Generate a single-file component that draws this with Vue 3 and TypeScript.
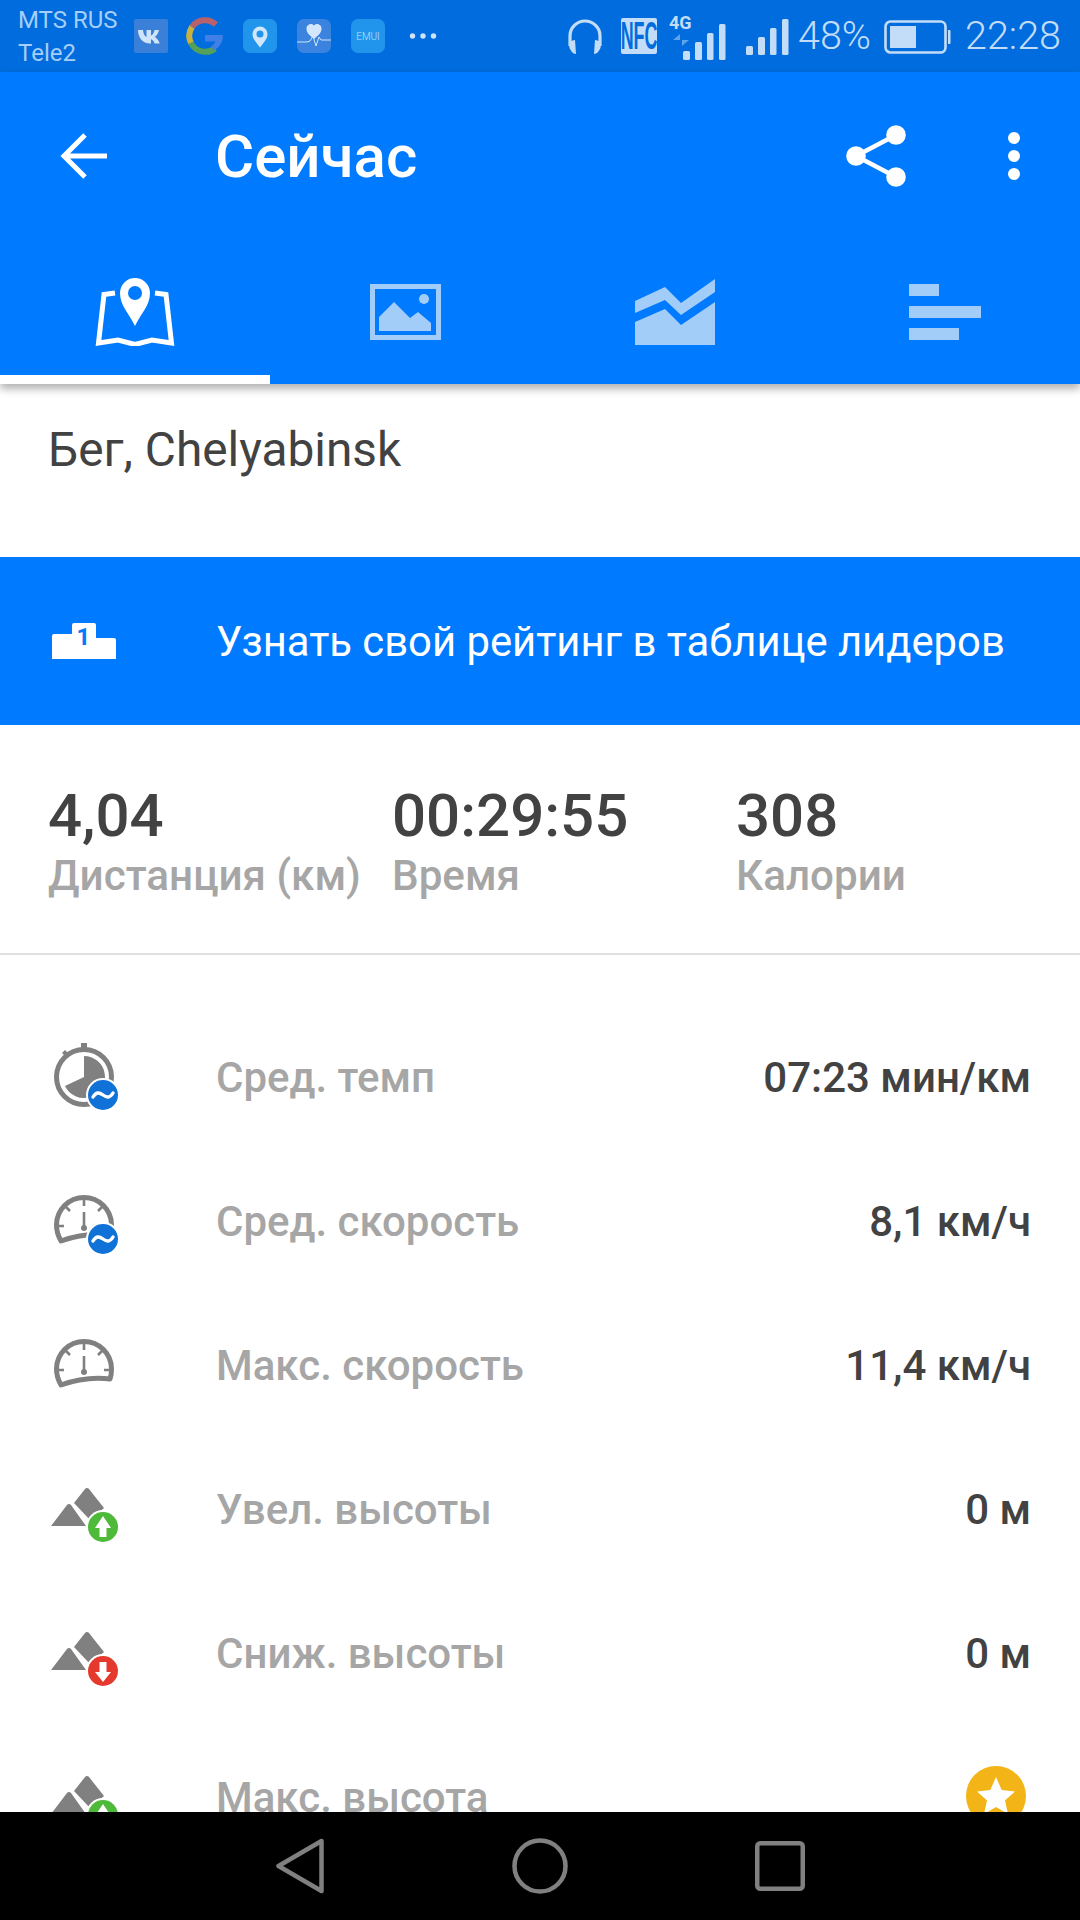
<script setup lang="ts">
interface Row { label: string; value?: string; icon: string }
const rows: Row[] = [
  { label: 'Сред. темп', value: '07:23 мин/км', icon: 'pace' },
  { label: 'Сред. скорость', value: '8,1 км/ч', icon: 'avg' },
  { label: 'Макс. скорость', value: '11,4 км/ч', icon: 'max' },
  { label: 'Увел. высоты', value: '0 м', icon: 'up' },
  { label: 'Сниж. высоты', value: '0 м', icon: 'down' },
  { label: 'Макс. высота', icon: 'top' }
]
const stats = [
  { value: '4,04', label: 'Дистанция (км)' },
  { value: '00:29:55', label: 'Время' },
  { value: '308', label: 'Калории' }
]
</script>

<template>
  <div class="screen">
    <header class="status">
      <div class="carriers"><span>MTS RUS</span><span>Tele2</span></div>
      <div class="notifs">
        <svg class="n1" width="34" height="34" viewBox="0 0 34 34"><rect width="34" height="34" rx="2" fill="#3a80d8"/><path d="M4 11h5c.3 4 2 6.3 3.5 7V11H17v5.500c1.500-.3 3-2.500 3.600-5.500H25c-.7 3.500-2.800 6-4.300 7 1.500.8 4 3 5 6.500h-5c-.7-2.300-2.300-4-3.700-4.300V24.500h-1C8.500 24.500 4.400 19 4 11z" fill="#cfe3fa"/></svg>
        <svg class="n2" width="38" height="38" viewBox="0 0 38 38">
          <path d="M30 7.500A16 16 0 0 0 6 10" fill="none" stroke="#b9616a" stroke-width="6"/>
          <path d="M6 10A16 16 0 0 0 5 26" fill="none" stroke="#c8b23c" stroke-width="6"/>
          <path d="M5 26A16 16 0 0 0 29 31.500" fill="none" stroke="#53a158" stroke-width="6"/>
          <path d="M27.500 33.500 A17 17 0 0 0 37 18H19v6.500h10.500a11 11 0 0 1-4 4.500z" fill="#3f7fe6"/>
        </svg>
        <svg class="n3" width="34" height="34" viewBox="0 0 34 34"><rect width="34" height="34" rx="7" fill="#2195ec"/><path d="M17 28.500c-4.500-6-7.500-9-7.500-13.500a7.500 7.500 0 0 1 15 0c0 4.500-3 7.500-7.500 13.500z" fill="#cfe6fb"/><circle cx="17" cy="15" r="3.500" fill="#2195ec"/></svg>
        <svg class="n4" width="34" height="34" viewBox="0 0 34 34"><rect width="34" height="34" rx="7" fill="#3a84e0"/><path d="M17 20C11 15 9.500 13 9.500 9.500 9.500 6.500 12 5 14 5c1.300 0 2.300.6 3 1.500C17.700 5.600 18.700 5 20 5c2 0 4.500 1.500 4.500 4.500C24.500 13 23 15 17 20z" fill="#d4e6fb"/><path d="M0 23h10l3-1 3-5 3 10 3-9 2 3h10" fill="none" stroke="#cfe3fa" stroke-width="1"/></svg>
        <svg class="n5" width="34" height="34" viewBox="0 0 34 34"><rect width="34" height="34" rx="7" fill="#2195ec"/><text x="17" y="21" text-anchor="middle" class="emui">EMUI</text></svg>
        <svg class="n6" width="28" height="8" viewBox="0 0 28 8" fill="#cfe3fa"><circle cx="3.500" cy="4" r="2.700"/><circle cx="14" cy="4" r="2.700"/><circle cx="24.500" cy="4" r="2.700"/></svg>
      </div>
      <div class="sys">
        <svg width="36" height="37" viewBox="0 0 36 37" class="s-head"><path d="M3 28V18a15 15 0 0 1 30 0v10" fill="none" stroke="#c3dcf8" stroke-width="3.200"/><path d="M2 24c2-1 4-2 6-2l1 14c-3 0-5-3-6.500-6zM34 24c-2-1-4-2-6-2l-1 14c3 0 5-3 6.500-6z" fill="#c3dcf8"/></svg>
        <div class="nfc"><span>NFC</span></div>
        <div class="g4">
          <span class="g4t">4G</span>
          <svg class="g4a" width="16" height="12" viewBox="0 0 16 12"><path d="M7 0v6H0zM9 12V6h7z" fill="#5ea4ec"/></svg>
          <svg class="g4s" width="43" height="36" viewBox="0 0 43 36" fill="#c3dcf8"><rect y="27" width="7" height="9" rx="1.500"/><rect x="12" y="18" width="7" height="18" rx="1.500"/><rect x="24" y="9" width="6.500" height="27" rx="1.500"/><rect x="36" y="0" width="6.500" height="36" rx="1.500"/></svg>
        </div>
        <svg class="s-sig" width="43" height="36" viewBox="0 0 43 36" fill="#c3dcf8"><rect y="27" width="7" height="9" rx="1.500"/><rect x="12" y="18" width="7" height="18" rx="1.500"/><rect x="24" y="9" width="6.500" height="27" rx="1.500"/><rect x="36" y="0" width="6.500" height="36" rx="1.500"/></svg>
        <span class="pct">48%</span>
        <svg class="bat" width="67" height="34" viewBox="0 0 67 34"><rect x="1.500" y="1.500" width="60" height="31" rx="5" fill="none" stroke="#c3dcf8" stroke-width="2.600"/><rect x="6" y="6" width="26" height="22" fill="#c3dcf8"/><path d="M64 10h1.500a1 1 0 0 1 1 1v12a1 1 0 0 1-1 1H64z" fill="#c3dcf8"/></svg>
        <span class="time">22:28</span>
      </div>
    </header>

    <div class="appbar">
      <div class="toolbar">
        <svg class="back" width="48" height="48" viewBox="0 0 48 48"><path d="M47 24H4M25 3 4 24l21 21" fill="none" stroke="#fff" stroke-width="5"/></svg>
        <h1 class="title">Сейчас</h1>
        <svg class="share" width="60" height="62" viewBox="0 0 60 62" fill="#fff"><circle cx="50" cy="10" r="9.800"/><circle cx="10" cy="31" r="9.800"/><circle cx="50" cy="52" r="9.800"/><path d="M50 10 10 31l40 21" fill="none" stroke="#fff" stroke-width="4.500"/></svg>
        <svg class="more" width="12" height="48" viewBox="0 0 12 48" fill="#fff"><circle cx="6" cy="6" r="6"/><circle cx="6" cy="24" r="6"/><circle cx="6" cy="42" r="6"/></svg>
      </div>
      <nav class="tabs">
        <div class="tab active">
          <svg width="80" height="68" viewBox="-1 0 80 68"><path d="M19 15 8 16.500 2.500 65l19.500-3 17 4.500 17-4.500 19.500 3L70 16.500 59 15" fill="none" stroke="#fff" stroke-width="5"/><path d="M39 48C33 35 24 28 24 15a15 15 0 0 1 30 0c0 13-9 20-15 33z" fill="#fff"/><circle cx="39" cy="15" r="7" fill="#007aff"/></svg>
        </div>
        <div class="tab">
          <svg width="71" height="56" viewBox="0 0 71 56" fill="#a3cdf9"><path d="M0 0h71v56H0zM5 5v46h61V5z" fill-rule="evenodd"/><circle cx="54" cy="15" r="5"/><path d="M9 33l15-15 16 16 8-6 13 11v8H9z"/></svg>
        </div>
        <div class="tab">
          <svg width="80" height="66" viewBox="0 0 80 66" fill="#a3cdf9"><path d="M0 22 30 8l16 16L80 0v13L46 36 30 21 0 34zM0 43l30-13 16 16 34-23v43H0z"/></svg>
        </div>
        <div class="tab">
          <svg width="72" height="56" viewBox="0 0 72 56" fill="#a3cdf9"><rect width="30" height="12"/><rect y="22" width="72" height="12"/><rect y="44" width="50" height="12"/></svg>
        </div>
      </nav>
    </div>

    <main class="content">
      <div class="place">Бег, Chelyabinsk</div>
      <div class="banner">
        <svg class="podium" width="64" height="36" viewBox="0 0 64 36"><path d="M20 2a2 2 0 0 1 2-2h20a2 2 0 0 1 2 2v13h18a2 2 0 0 1 2 2v19H0V13a2 2 0 0 1 2-2h18z" fill="#fff"/><text x="31.500" y="22" text-anchor="middle" class="pod-n">1</text></svg>
        <span class="banner-text">Узнать свой рейтинг в таблице лидеров</span>
      </div>
      <div class="stats">
        <div v-for="s in stats" :key="s.label" class="stat">
          <div class="stat-val">{{ s.value }}</div>
          <div class="stat-lab">{{ s.label }}</div>
        </div>
      </div>
      <ul class="list">
        <li v-for="r in rows" :key="r.label" class="row">
          <span class="ico">
            <svg width="70" height="70" viewBox="0 0 70 70">
              <template v-if="r.icon === 'pace'">
                <circle cx="34" cy="35" r="27.500" fill="none" stroke="#808080" stroke-width="5"/>
                <rect x="31" y="1" width="6" height="6" fill="#808080"/>
                <path d="M12 11l3-3 5 5-3 3z" fill="#808080"/>
                <path d="M34 14A21 21 0 1 1 15 44L34 35z" fill="#808080"/>
              </template>
              <template v-else-if="r.icon === 'avg' || r.icon === 'max'">
                <path d="M11 55C7 48 6.500 43 6.500 39A27.500 27.500 0 0 1 61.500 39C61.500 43 61 46 60 49C43 47 25 50 11 55z" fill="none" stroke="#808080" stroke-width="5" stroke-linejoin="round"/>
                <path d="M34 14v6M16 21l4 4M52 21l-4 4M7 40h7M54 40h7" stroke="#808080" stroke-width="2.600"/>
                <path d="M34 26v15" stroke="#808080" stroke-width="2.600"/><circle cx="34" cy="42" r="3" fill="#808080"/>
              </template>
              <template v-else>
                <path d="M1 52 17 31a2.500 2.500 0 0 1 4 0L36 52z" fill="#808080"/>
                <path d="M24 29 35 15a2.500 2.500 0 0 1 4 0L54 34 40 46z" fill="#808080"/>
              </template>
              <template v-if="r.icon === 'pace' || r.icon === 'avg'">
                <circle cx="53" cy="53" r="17" fill="#fff"/>
                <circle cx="53" cy="53" r="15" fill="#1072d6"/>
                <path d="M43 55c3-5 6-5 10-2s7 3 10-2" fill="none" stroke="#fff" stroke-width="3.400" stroke-linecap="round"/>
              </template>
              <template v-if="r.icon === 'up' || r.icon === 'top'">
                <circle cx="53" cy="53" r="17" fill="#fff"/>
                <circle cx="53" cy="53" r="15" fill="#4fb93a"/>
                <path d="M53 42 61 54h-4.500v9h-7v-9H45z" fill="#fff"/>
              </template>
              <template v-if="r.icon === 'down'">
                <circle cx="53" cy="53" r="17" fill="#fff"/>
                <circle cx="53" cy="53" r="15" fill="#e5392e"/>
                <path d="M53 64 61 54h-4.500V44h-7v10H45z" fill="#fff"/>
              </template>
            </svg>
          </span>
          <span class="lab">{{ r.label }}</span>
          <span v-if="r.value" class="val">{{ r.value }}</span>
          <svg v-else class="medal" width="60" height="60" viewBox="0 0 60 60"><circle cx="30" cy="30" r="30" fill="#f2b416"/><path d="M30 11l5.700 13 13.300 1.500-10 9 3 13.500L30 41l-12 7 3-13.500-10-9 13.300-1.500z" fill="#fff"/></svg>
        </li>
      </ul>
    </main>

    <footer class="navbar">
      <svg width="48" height="56" viewBox="0 0 48 56"><path d="M45.500 3 2.500 28l43 25z" fill="none" stroke="#808080" stroke-width="4.500" stroke-linejoin="round"/></svg>
      <svg width="56" height="56" viewBox="0 0 56 56"><circle cx="28" cy="28" r="25.500" fill="none" stroke="#808080" stroke-width="4.500"/></svg>
      <svg width="50" height="50" viewBox="0 0 50 50"><rect x="2.250" y="2.250" width="45.500" height="45.500" rx="3" fill="none" stroke="#808080" stroke-width="4.500"/></svg>
    </footer>
  </div>
</template>

<style scoped>
.screen {
  width: 1080px;
  height: 1920px;
  display: flex;
  flex-direction: column;
  overflow: hidden;
  background: #fff;
  font-family: Roboto, "Noto Sans", sans-serif;
}
.status {
  height: 72px;
  flex: none;
  display: flex;
  align-items: center;
  background: #006cdd;
  color: #a5cef8;
}
.carriers {
  width: 134px;
  flex: none;
  padding-left: 18px;
  box-sizing: border-box;
  display: flex;
  flex-direction: column;
  font-size: 24px;
  line-height: 33px;
  margin-top: 1px;
}
.notifs { display: flex; align-items: center; }
.n1 { margin-right: 18px; }
.n2 { margin-right: 19px; }
.n3 { margin-right: 20px; }
.n4 { margin-right: 20px; }
.n5 { margin-right: 24px; }
.emui { font-size: 10px; font-weight: 300; fill: #bfe0fc; }
.sys {
  margin-left: auto;
  width: 513px;
  flex: none;
  display: flex;
  align-items: center;
  color: #c3dcf8;
}
.s-head { margin-right: 18px; }
.nfc {
  width: 36px;
  height: 36px;
  background: #c3dcf8;
  border-radius: 2px;
  color: #006cdd;
  font: 700 38px/36px "Liberation Sans Narrow", "Liberation Sans", sans-serif;
  margin-right: 12px;
  display: flex;
  justify-content: center;
}
.nfc span { display: block; flex: none; transform: scaleX(.47); }
.g4 { position: relative; width: 57px; height: 44px; margin: 0 20px 0 0; }
.g4t { position: absolute; left: 0; top: -1px; font-weight: 700; font-size: 18px; line-height: 20px; }
.g4a { position: absolute; left: 4px; top: 20px; }
.g4s { position: absolute; left: 14px; bottom: -2px; }
.s-sig { margin: 2px 9px 0 0; }
.pct, .time { font-size: 39.5px; font-weight: 300; line-height: 72px; }
.pct { margin-right: 13px; }
.bat { margin: 2px 14px 0 0; }
.appbar {
  height: 312px;
  flex: none;
  background: #007aff;
  position: relative;
  z-index: 1;
  box-shadow: 0 5px 8px rgba(0, 0, 0, .3);
}
.toolbar {
  height: 168px;
  display: flex;
  align-items: center;
  padding-left: 60px;
  box-sizing: border-box;
}
.title {
  margin: 0 0 0 107px;
  color: #fff;
  font-size: 60px;
  font-weight: 500;
}
.share { margin-left: auto; margin-right: 102px; }
.more { margin-right: 60px; }
.tabs { height: 144px; display: flex; }
.tab {
  flex: 1;
  display: flex;
  justify-content: center;
  align-items: center;
  position: relative;
}
.active::after {
  content: "";
  position: absolute;
  left: 0;
  right: 0;
  bottom: 0;
  height: 9px;
  background: #fff;
}
.content { flex: 1; min-height: 0; overflow: hidden; }
.place {
  height: 173px;
  padding: 40px 0 0 48px;
  box-sizing: border-box;
  font-size: 47.8px;
  line-height: 52px;
  color: #424242;
}
.banner {
  height: 168px;
  background: #007aff;
  display: flex;
  align-items: center;
  padding-left: 52px;
  color: #fff;
}
.podium { margin-right: 100px; }
.pod-n { font: 700 24px Roboto, sans-serif; fill: #007aff; }
.banner-text { font-size: 41.8px; }
.stats {
  height: 230px;
  padding: 58px 0 0 48px;
  box-sizing: border-box;
  display: flex;
  border-bottom: 2px solid #e0e0e0;
}
.stat { width: 344px; flex: none; }
.stat-val { font-size: 60px; font-weight: 500; line-height: 66px; color: #424242; }
.stat-lab { font-size: 42.2px; font-weight: 500; line-height: 52px; margin-top: 1px; color: #a6a6a6; }
.list { margin: 50px 0 0; padding: 0 49px 0 0; list-style: none; }
.row { height: 144px; display: flex; align-items: center; }
.ico { width: 216px; padding-left: 50px; box-sizing: border-box; flex: none; display: flex; }
.lab { font-size: 42px; font-weight: 500; color: #a6a6a6; }
.val { margin-left: auto; font-size: 42px; font-weight: 500; color: #424242; }
.medal { margin-left: auto; margin-right: 5px; margin-top: -2px; }
.navbar {
  height: 108px;
  flex: none;
  background: #000;
  display: flex;
  align-items: center;
}
.navbar svg:nth-child(1) { margin-left: 276px; }
.navbar svg:nth-child(2) { margin-left: 188px; }
.navbar svg:nth-child(3) { margin-left: 187px; }
</style>
